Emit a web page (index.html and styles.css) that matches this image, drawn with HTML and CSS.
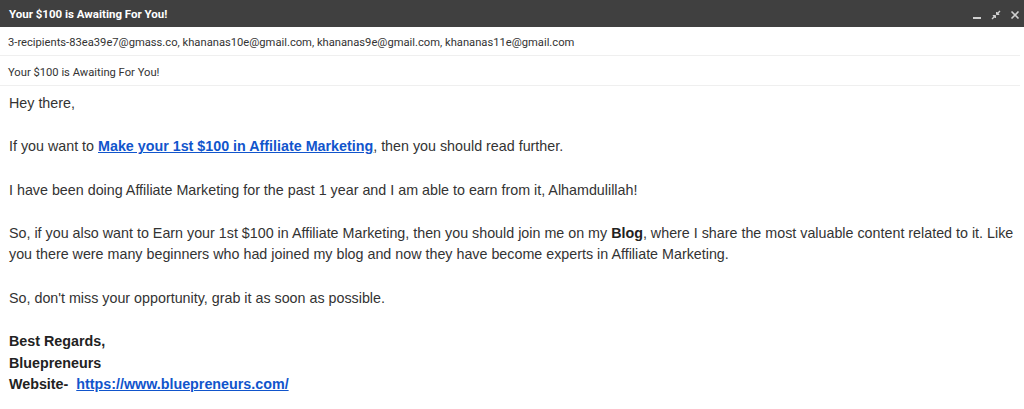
FILE: index.html
```html
<!DOCTYPE html>
<html>
<head>
<meta charset="utf-8">
<link rel="stylesheet" href="styles.css">
</head>
<body>
<div class="header">
  <div class="title">Your $100 is Awaiting For You!</div>
  <div class="icons">
    <svg class="ic" width="10" height="10" viewBox="0 0 10 10"><rect x="1" y="7" width="8" height="2" fill="#d0d0d0"/></svg>
    <svg class="ic" width="10" height="10" viewBox="0 0 10 10"><path d="M1 9 L4 6 M6 4 L9 1" stroke="#d0d0d0" stroke-width="1.4"/><path d="M2 5.5 H4.5 V8 Z M8 4.5 H5.5 V2 Z" fill="#d0d0d0" stroke="#d0d0d0" stroke-width="1"/></svg>
    <svg class="ic" width="10" height="10" viewBox="0 0 10 10"><path d="M1.5 1.5 L8.5 8.5 M8.5 1.5 L1.5 8.5" stroke="#d0d0d0" stroke-width="1.6"/></svg>
  </div>
</div>
<div class="row">3-recipients-83ea39e7@gmass.co, khananas10e@gmail.com, khananas9e@gmail.com, khananas11e@gmail.com</div>
<div class="row subject">Your $100 is Awaiting For You!</div>
<div class="body">
  <p>Hey there,</p>
  <p>If you want to <a href="#" class="lk"><b>Make your 1st $100 in Affiliate Marketing</b></a>, then you should read further.</p>
  <p>I have been doing Affiliate Marketing for the past 1 year and I am able to earn from it, Alhamdulillah!</p>
  <p>So, if you also want to Earn your 1st $100 in Affiliate Marketing, then you should join me on my <b>Blog</b>, where I share the most valuable content related to it. Like you there were many beginners who had joined my blog and now they have become experts in Affiliate Marketing.</p>
  <p>So, don't miss your opportunity, grab it as soon as possible.</p>
  <p class="sig"><b>Best Regards,<br>Bluepreneurs<br>Website-&nbsp; <a href="#" class="lk">https://www.bluepreneurs.com/</a></b></p>
</div>
</body>
</html>
```
FILE: styles.css
```css
html, body { margin: 0; padding: 0; background: #fff; }
body { width: 1024px; height: 409px; overflow: hidden; font-family: Roboto, "Liberation Sans", Arial, sans-serif; }
.header { height: 27px; background: #404040; display: flex; align-items: center; justify-content: space-between; padding: 0 4px 0 9px; }
.title { color: #fff; font-weight: bold; font-size: 11.5px; }
.icons { display: flex; gap: 9px; align-items: center; padding-top: 2px; }
.ic { display: block; }
.row { margin: 0 4px 0 0; padding: 0 0 0 8px; height: 28px; line-height: 32px; font-size: 11.2px; color: #333; border-bottom: 1px solid #efefef; }
.subject { height: 29px; line-height: 33px; }
.body { padding: 7px 8px 0 9px; font-family: Arial, "Liberation Sans", sans-serif; font-size: 14.3px; line-height: 21.6px; color: #333; }
.body p { margin: 0 0 21.7px 0; }
.body b { color: #222; }
.lk, .lk b { color: #1155cc; text-decoration: underline; }
```
